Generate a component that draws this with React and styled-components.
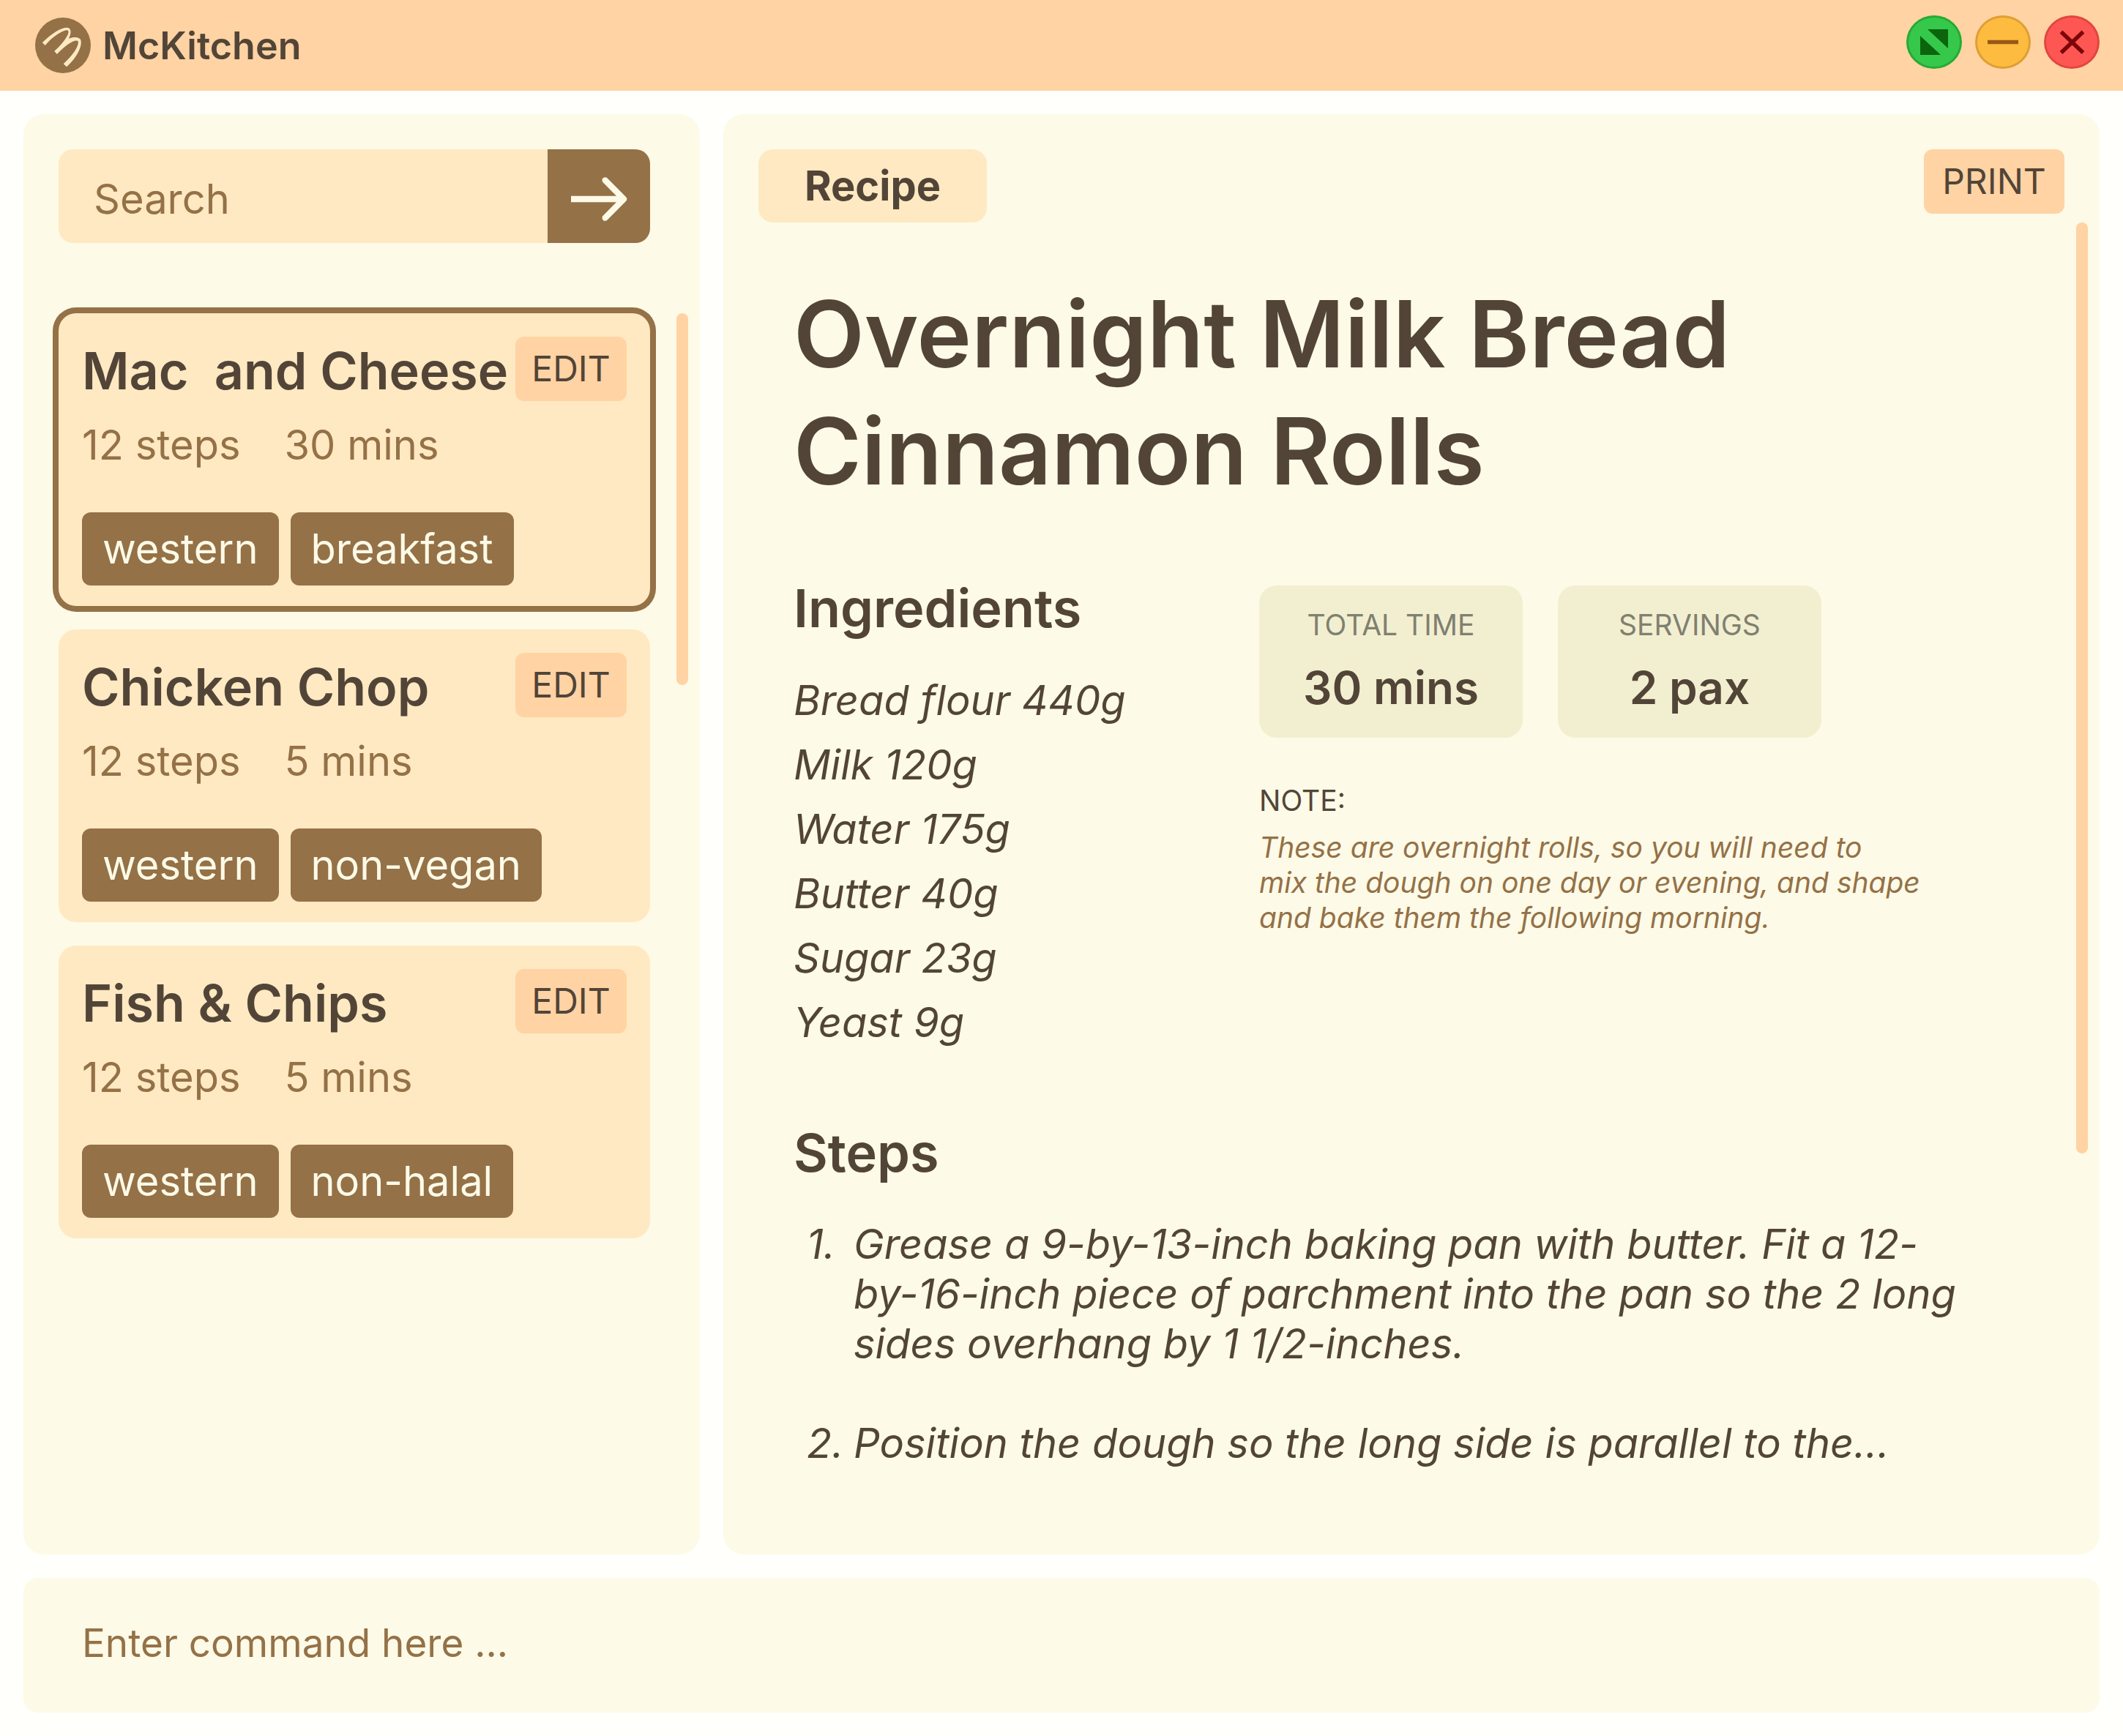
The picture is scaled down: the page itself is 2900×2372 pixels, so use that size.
import React from "react";
import styled, { createGlobalStyle } from "styled-components";

const color = {
  page: "#fffffb",
  bar: "#ffd3a3",
  panel: "#fdfae7",
  card: "#ffe9c2",
  brown: "#947147",
  ink: "#524538",
  stat: "#f2efd0",
  muted: "#808070",
};

const GlobalStyle = createGlobalStyle`
  *, *::before, *::after { box-sizing: border-box; }
  body {
    margin: 0;
    background: ${color.page};
    color: ${color.ink};
    font-family: Inter, "Liberation Sans", sans-serif;
  }
  h1, h2, h3, p, ul, ol, dl, dt, dd { margin: 0; padding: 0; }
  ul, ol { list-style: none; }
  button, input { font: inherit; color: inherit; border: 0; padding: 0; margin: 0; }
  button { cursor: pointer; }
`;

const Page = styled.div`
  display: flex;
  flex-direction: column;
  min-height: 100vh;
`;

const TitleBar = styled.header`
  display: flex;
  align-items: center;
  justify-content: space-between;
  height: 124px;
  padding: 0 32px 0 48px;
  background: ${color.bar};
`;

const Brand = styled.div`
  display: flex;
  align-items: center;
  gap: 16px;
  font-size: 52px;
  font-weight: 600;
`;

const Logo = styled.svg`
  width: 76px;
  height: 76px;
`;

const Controls = styled.div`
  display: flex;
  gap: 18px;
  padding-bottom: 9px;
`;

const Control = styled.button`
  width: 76px;
  height: 73px;
  border: 3px solid ${(p) => p.$edge};
  border-radius: 50%;
  background: ${(p) => p.$fill};
  color: ${(p) => p.$mark};
  display: grid;
  place-items: center;

  svg {
    width: 70px;
    height: 67px;
  }
`;

const Workspace = styled.div`
  flex: 1;
  display: flex;
  flex-direction: column;
  gap: 32px;
  padding: 32px;
`;

const Columns = styled.div`
  flex: 1;
  display: grid;
  grid-template-columns: minmax(0, 924fr) minmax(0, 1880fr);
  gap: 32px;
`;

const Panel = styled.section`
  display: flex;
  flex-direction: column;
  padding: 48px 16px 48px 48px;
  border-radius: 28px;
  background: ${color.panel};
`;

const SearchForm = styled.form`
  display: flex;
  height: 128px;
  margin: 0 52px 96px 0;
  border-radius: 20px;
  overflow: hidden;
  background: ${color.card};
`;

const SearchInput = styled.input`
  flex: 1;
  min-width: 0;
  padding: 8px 24px 0 48px;
  background: transparent;
  font-size: 56px;
  outline: none;

  &::placeholder {
    color: ${color.brown};
    opacity: 1;
  }
`;

const SearchButton = styled.button`
  display: grid;
  place-items: center;
  width: 140px;
  padding-top: 8px;
  background: ${color.brown};
  color: ${color.panel};

  svg {
    width: 84px;
    height: 66px;
  }
`;

const ScrollRow = styled.div`
  display: flex;
  align-items: flex-start;
`;

const Thumb = styled.div`
  flex: none;
  width: 16px;
  height: ${(p) => p.$length}px;
  border-radius: 8px;
  background: ${color.bar};
`;

const CardList = styled.ul`
  flex: 1;
  min-width: 0;
  display: flex;
  flex-direction: column;
  gap: 32px;
  margin-right: 36px;
`;

const Card = styled.li`
  padding: 32px 32px 28px;
  border-radius: 24px;
  background: ${color.card};
  box-shadow: ${(p) => (p.$selected ? `0 0 0 8px ${color.brown}` : "none")};
`;

const CardHead = styled.div`
  display: flex;
  align-items: flex-start;
  justify-content: space-between;
`;

const CardTitle = styled.h3`
  font-size: 70px;
  font-weight: 600;
  line-height: 94px;
  white-space: pre;
`;

const SmallButton = styled.button`
  flex: none;
  width: ${(p) => p.$width}px;
  height: 88px;
  border-radius: 12px;
  background: ${color.bar};
  font-size: 48px;
  line-height: 88px;
`;

const CardFacts = styled.p`
  display: flex;
  gap: 60px;
  margin-top: 20px;
  color: ${color.brown};
  font-size: 56px;
  line-height: 68px;
`;

const Tags = styled.ul`
  display: flex;
  gap: 16px;
  margin-top: 58px;
`;

const Tag = styled.li`
  padding: 0 28px;
  border-radius: 12px;
  background: ${color.brown};
  color: ${color.panel};
  font-size: 56px;
  line-height: 100px;
`;

const PanelHead = styled.div`
  display: flex;
  align-items: flex-start;
  justify-content: space-between;
  margin-right: 32px;
`;

const Tab = styled.button`
  width: 312px;
  height: 100px;
  border-radius: 20px;
  background: ${color.card};
  font-size: 56px;
  font-weight: 700;
  line-height: 100px;
`;

const Article = styled.article`
  flex: 1;
  min-width: 0;
  padding: 72px 48px 0;
`;

const RecipeTitle = styled.h1`
  max-width: 1400px;
  font-size: 126px;
  font-weight: 600;
  line-height: 160px;
`;

const Overview = styled.div`
  display: grid;
  grid-template-columns: 636px minmax(0, 1fr);
  margin-top: 87px;
`;

const SectionTitle = styled.h2`
  font-size: 72px;
  font-weight: 600;
  line-height: 96px;
`;

const Ingredients = styled.ul`
  margin-top: 34px;
  font-size: 56px;
  font-style: italic;
  line-height: 88px;
`;

const Aside = styled.div`
  padding-top: 17px;
`;

const Stats = styled.dl`
  display: flex;
  gap: 48px;
`;

const Stat = styled.div`
  width: 360px;
  height: 208px;
  padding-top: 30px;
  border-radius: 24px;
  background: ${color.stat};
  text-align: center;
`;

const StatLabel = styled.dt`
  color: ${color.muted};
  font-size: 39px;
  line-height: 48px;
`;

const StatValue = styled.dd`
  margin-top: 22px;
  font-size: 62px;
  font-weight: 600;
  line-height: 80px;
`;

const NoteTitle = styled.h3`
  margin-top: 62px;
  font-size: 39px;
  font-weight: 400;
  line-height: 48px;
`;

const NoteText = styled.p`
  margin-top: 16px;
  color: ${color.brown};
  font-size: 39px;
  font-style: italic;
  line-height: 48px;
`;

const StepsTitle = styled(SectionTitle)`
  margin-top: 86px;
`;

const Steps = styled.ol`
  display: flex;
  flex-direction: column;
  gap: 68px;
  margin: 43px 0 0 18px;
  font-size: 56px;
  font-style: italic;
  line-height: 68px;
`;

const Step = styled.li`
  display: grid;
  grid-template-columns: 64px minmax(0, 1510px);
`;

const CommandInput = styled.input`
  width: 100%;
  height: 184px;
  padding: 0 80px 6px;
  border-radius: 20px;
  background: ${color.panel};
  font-size: 53px;
  outline: none;

  &::placeholder {
    color: ${color.brown};
    opacity: 1;
  }
`;

const recipes = [
  { name: "Mac  and Cheese", steps: "12 steps", time: "30 mins", tags: ["western", "breakfast"], selected: true },
  { name: "Chicken Chop", steps: "12 steps", time: "5 mins", tags: ["western", "non-vegan"] },
  { name: "Fish & Chips", steps: "12 steps", time: "5 mins", tags: ["western", "non-halal"] },
];

const ingredients = ["Bread flour 440g", "Milk 120g", "Water 175g", "Butter 40g", "Sugar 23g", "Yeast 9g"];

const steps = [
  "Grease a 9-by-13-inch baking pan with butter. Fit a 12-by-16-inch piece of parchment into the pan so the 2 long sides overhang by 1 1/2-inches.",
  "Position the dough so the long side is parallel to the...",
];

function RecipeCard({ recipe }) {
  return (
    <Card $selected={recipe.selected}>
      <CardHead>
        <CardTitle>{recipe.name}</CardTitle>
        <SmallButton type="button" $width={152}>EDIT</SmallButton>
      </CardHead>
      <CardFacts>
        <span>{recipe.steps}</span>
        <span>{recipe.time}</span>
      </CardFacts>
      <Tags>
        {recipe.tags.map((tag) => (
          <Tag key={tag}>{tag}</Tag>
        ))}
      </Tags>
    </Card>
  );
}

export default function App() {
  return (
    <>
      <GlobalStyle />
      <Page>
        <TitleBar>
          <Brand>
            <Logo viewBox="24 22 226 226" aria-hidden="true">
              <circle cx="137" cy="135" r="113" fill={color.brown} />
              <path
                fill={color.card}
                d="M53 124 C95 82 134 62 154 63 C172 65 172 86 160 108 C182 98 205 102 209 113 C218 140 188 192 152 222 L139 210 C175 178 202 140 199 119 C190 107 150 130 113 171 L102 159 C140 125 166 86 158 75 C147 66 95 98 65 135 Z"
              />
            </Logo>
            <span>McKitchen</span>
          </Brand>
          <Controls>
            <Control type="button" aria-label="Expand" $fill="#36c84b" $edge="#27aa35" $mark="#0b650d">
              <svg viewBox="3 3 70 67" fill="currentColor" aria-hidden="true">
                <path d="M29 19H57V45Z M19 28V54H47Z" />
              </svg>
            </Control>
            <Control type="button" aria-label="Minimize" $fill="#fdbc40" $edge="#de9f34" $mark="#9a5814">
              <svg viewBox="3 3 70 67" fill="none" stroke="currentColor" strokeWidth="5.5" aria-hidden="true">
                <path d="M17 36.5H59" />
              </svg>
            </Control>
            <Control type="button" aria-label="Close" $fill="#fe5753" $edge="#e14640" $mark="#7d0508">
              <svg viewBox="3 3 70 67" fill="none" stroke="currentColor" strokeWidth="5.5" aria-hidden="true">
                <path d="M23.5 22.5L53.5 51M53.5 22.5L23.5 51" />
              </svg>
            </Control>
          </Controls>
        </TitleBar>

        <Workspace>
          <Columns>
            <Panel aria-label="Recipes">
              <SearchForm role="search" onSubmit={(e) => e.preventDefault()}>
                <SearchInput type="text" placeholder="Search" aria-label="Search" />
                <SearchButton type="submit" aria-label="Go">
                  <svg viewBox="108 129 252 198" fill="none" stroke="currentColor" strokeWidth="25" aria-hidden="true">
                    <path d="M120 228H330" />
                    <path d="M260 151L336 228L260 305" strokeLinecap="round" strokeLinejoin="round" />
                  </svg>
                </SearchButton>
              </SearchForm>
              <ScrollRow>
                <CardList>
                  {recipes.map((recipe) => (
                    <RecipeCard key={recipe.name} recipe={recipe} />
                  ))}
                </CardList>
                <Thumb $length={508} />
              </ScrollRow>
            </Panel>

            <Panel aria-label="Recipe">
              <PanelHead>
                <Tab type="button">Recipe</Tab>
                <SmallButton type="button" $width={192}>PRINT</SmallButton>
              </PanelHead>
              <ScrollRow>
                <Article>
                  <RecipeTitle>Overnight Milk Bread Cinnamon Rolls</RecipeTitle>
                  <Overview>
                    <div>
                      <SectionTitle>Ingredients</SectionTitle>
                      <Ingredients>
                        {ingredients.map((item) => (
                          <li key={item}>{item}</li>
                        ))}
                      </Ingredients>
                    </div>
                    <Aside>
                      <Stats>
                        <Stat>
                          <StatLabel>TOTAL TIME</StatLabel>
                          <StatValue>30 mins</StatValue>
                        </Stat>
                        <Stat>
                          <StatLabel>SERVINGS</StatLabel>
                          <StatValue>2 pax</StatValue>
                        </Stat>
                      </Stats>
                      <NoteTitle>NOTE:</NoteTitle>
                      <NoteText>
                        These are overnight rolls, so you will need to
                        <br />
                        mix the dough on one day or evening, and shape
                        <br />
                        and bake them the following morning.
                      </NoteText>
                    </Aside>
                  </Overview>
                  <StepsTitle>Steps</StepsTitle>
                  <Steps>
                    {steps.map((text, i) => (
                      <Step key={text}>
                        <span>{i + 1}.</span>
                        <span>{text}</span>
                      </Step>
                    ))}
                  </Steps>
                </Article>
                <Thumb $length={1272} />
              </ScrollRow>
            </Panel>
          </Columns>
          <CommandInput type="text" placeholder="Enter command here ..." aria-label="Command" />
        </Workspace>
      </Page>
    </>
  );
}
